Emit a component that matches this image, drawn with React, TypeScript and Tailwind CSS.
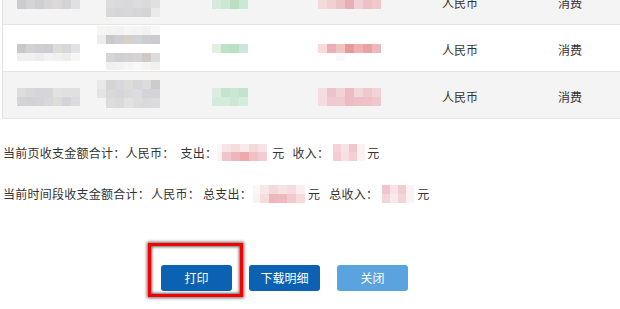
import React from "react";

type Grid = { h: string; cells: { w: string; c: string }[] }[];

function Mosaic({ rows }: { rows: Grid }) {
  return (
    <div className="flex flex-col">
      {rows.map((r, i) => (
        <div key={i} className={`flex ${r.h}`}>
          {r.cells.map((c, j) => (
            <div key={j} className={`${c.w} h-full ${c.c}`} />
          ))}
        </div>
      ))}
    </div>
  );
}

const w9 = "w-[9px]";
const w8 = "w-[8px]";
const row = (h: string, w: string, colors: string[]) => ({
  h,
  cells: colors.map((c) => ({ w, c })),
});

// Row 1
const r1c1: Grid = [
  row("h-[9px]", w9, ["bg-[#dadadc]", "bg-[#d8d8da]", "bg-[#d6d6d8]", "bg-[#dadadc]", "bg-[#e0dedc]", "bg-[#d8d8da]", "bg-[#e2e2e4]"]),
  row("h-[9px]", w9, ["bg-[#cbcbcd]", "bg-[#d4d4d6]", "bg-[#cfcfd1]", "bg-[#d6d6d8]", "bg-[#dcdad6]", "bg-[#d3d3d5]", "bg-[#e0e0e2]"]),
];
const r1c2: Grid = [
  row("h-[8px]", w9, ["", "bg-[#e4e4e4]", "bg-[#e0e0e2]", "bg-[#e2e2e2]", "bg-[#dedee0]", "bg-[#e2e2e2]", "bg-[#e4e4e6]"]),
  row("h-[9px]", w9, ["", "bg-[#dcdcdc]", "bg-[#d8d8da]", "bg-[#dadada]", "bg-[#d8d8dc]", "bg-[#dcdcdc]", "bg-[#dedee0]"]),
  row("h-[8px]", w9, ["", "bg-[#dcdcdc]", "bg-[#dadadc]", "bg-[#d9d9d9]", "bg-[#dcdcde]", "bg-[#dadada]", "bg-[#e0e0e0]"]),
  row("h-[9px]", w9, ["", "bg-[#d8d8d8]", "bg-[#d6d6d8]", "bg-[#d8d8da]", "bg-[#d6d6d6]", "bg-[#d4d4d6]", "bg-[#eaeaea]"]),
];
const r1g: Grid = [
  row("h-[9px]", w9, ["bg-[#e0eee2]", "bg-[#d4ebdb]", "bg-[#cce6d2]", "bg-[#d6eddf]"]),
  row("h-[9px]", w9, ["bg-[#d8eadb]", "bg-[#cce8d4]", "bg-[#bcdfc4]", "bg-[#c9e8d7]"]),
];
const r1p: Grid = [
  row("h-[9px]", w9, ["bg-[#f6e0e0]", "bg-[#f2d4d6]", "bg-[#efccd0]", "bg-[#ecc0c4]", "bg-[#f2d6da]", "bg-[#efc8cc]", "bg-[#f2d0d4]"]),
  row("h-[9px]", w9, ["bg-[#f5dada]", "bg-[#f0d0d0]", "bg-[#ebc4c8]", "bg-[#e8b0b4]", "bg-[#f0d0d4]", "bg-[#ecc0c4]", "bg-[#f0c8cc]"]),
];

// Row 2
const r2c1: Grid = [
  row("h-[9px]", w9, ["bg-[#c9c9cb]", "bg-[#d2d2d6]", "bg-[#cfcfd1]", "bg-[#cbccd4]", "bg-[#dedcd8]", "bg-[#d8d8da]", "bg-[#e0e2e4]"]),
  row("h-[8px]", w9, ["bg-[#efefef]", "bg-[#f0f0f0]", "bg-[#ededed]", "bg-[#f3f3f3]", "bg-[#f1f1f1]", "bg-[#eeeeee]", "bg-[#f6f6f6]"]),
];
const r2c2: Grid = [
  row("h-[9px]", w9, ["bg-[#f6f6f4]", "bg-[#f4f4f4]", "bg-[#f2f2f2]", "bg-[#f6f6f6]", "bg-[#f4f4f4]", "bg-[#f2f2f4]", "bg-[#f8f8f8]"]),
  row("h-[9px]", w9, ["bg-[#ececea]", "bg-[#c9c9cb]", "bg-[#cecdd2]", "bg-[#d5d0cb]", "bg-[#d1d2d8]", "bg-[#cdcdd1]", "bg-[#cbcbcf]"]),
  row("h-[9px]", w9, ["", "", "", "", "", "", ""]),
  row("h-[9px]", w9, ["", "bg-[#d5d5d5]", "bg-[#d0d0d2]", "bg-[#d2d2d4]", "bg-[#d4d4d4]", "bg-[#cfc8c4]", "bg-[#dcdcde]"]),
  row("h-[8px]", w9, ["", "bg-[#f0f0f0]", "bg-[#f2f2f2]", "bg-[#f5f5f5]", "bg-[#f8f8f8]", "bg-[#f6f4f2]", "bg-[#f0f0f0]"]),
];
const r2g: Grid = [row("h-[9px]", w9, ["bg-[#e2efdc]", "bg-[#bde1cb]", "bg-[#bde0c3]", "bg-[#cbe8d9]"])];
const r2p: Grid = [
  row("h-[9px]", w9, ["bg-[#f8dbd8]", "bg-[#eab0b5]", "bg-[#f2c3c3]", "bg-[#e8999a]", "bg-[#eeb0b3]", "bg-[#eaa3a5]", "bg-[#eeb9bd]"]),
  row("h-[8px]", w9, ["", "", "bg-[#fbf8fa]", "", "", "", ""]),
];

// Row 3
const r3c1: Grid = [
  row("h-[9px]", w9, ["bg-[#dcdcdc]", "bg-[#d8d8da]", "bg-[#d6d6d8]", "bg-[#d4d6da]", "bg-[#e2e2e2]", "bg-[#e0e0e0]", "bg-[#e0e0e2]"]),
  row("h-[9px]", w9, ["bg-[#d4d4d6]", "bg-[#d2d2d2]", "bg-[#d4d4d4]", "bg-[#d6d8da]", "bg-[#dedcd8]", "bg-[#d4d4d8]", "bg-[#dcdcde]"]),
];
const r3c2: Grid = [
  row("h-[9px]", w9, ["bg-[#e8e8e8]", "bg-[#d4d4d4]", "bg-[#d8d8dc]", "bg-[#dcdcd8]", "bg-[#d6d6da]", "bg-[#dcdcdc]", "bg-[#ccccd0]"]),
  row("h-[9px]", w9, ["bg-[#e4e4e4]", "bg-[#d8d8d8]", "bg-[#d6d6da]", "bg-[#dadada]", "bg-[#dcdce0]", "bg-[#d4d4d8]", "bg-[#d4d4d6]"]),
  row("h-[10px]", w9, ["", "bg-[#dcdcdc]", "bg-[#dadadc]", "bg-[#e2e2e0]", "bg-[#dcdcdc]", "bg-[#dadada]", "bg-[#dcdcde]"]),
];
const r3g: Grid = [
  row("h-[9px]", w9, ["bg-[#dcece0]", "bg-[#c4e4cf]", "bg-[#cbe6d2]", "bg-[#c2e3cc]"]),
  row("h-[9px]", w9, ["bg-[#d3ebdd]", "bg-[#d2ebdb]", "bg-[#cde7d3]", "bg-[#d3ecdc]"]),
];
const r3p: Grid = [
  row("h-[9px]", w9, ["bg-[#f3dde0]", "bg-[#edc3cb]", "bg-[#f1d2d5]", "bg-[#ecbcc3]", "bg-[#f1d6da]", "bg-[#eec8cc]", "bg-[#f1d4d8]"]),
  row("h-[9px]", w9, ["bg-[#f3dde0]", "bg-[#eecacf]", "bg-[#f0cacd]", "bg-[#ecbcc2]", "bg-[#eebfc4]", "bg-[#edc1c5]", "bg-[#eec8cc]"]),
];

// Summary
const s1a: Grid = [
  {
    h: "h-[8px]",
    cells: [
      { w: "w-[5px]", c: "bg-[#fdf8f8]" },
      { w: w9, c: "bg-[#f8e4e6]" },
      { w: w9, c: "bg-[#f5dcdd]" },
      { w: w9, c: "bg-[#f9eaea]" },
      { w: w9, c: "bg-[#f3dada]" },
      { w: w9, c: "bg-[#f7e4e6]" },
    ],
  },
  {
    h: "h-[9px]",
    cells: [
      { w: "w-[5px]", c: "bg-[#fcf0f0]" },
      { w: w9, c: "bg-[#f0c4c8]" },
      { w: w9, c: "bg-[#eeb5bc]" },
      { w: w9, c: "bg-[#eda9b0]" },
      { w: w9, c: "bg-[#f0c0c4]" },
      { w: w9, c: "bg-[#f2ccd0]" },
    ],
  },
];
const s1b: Grid = [
  row("h-[8px]", w8, ["bg-[#f5d3d6]", "bg-[#f8e4e6]", "bg-[#f0c8cc]", "bg-[#fbf0f2]"]),
  row("h-[9px]", w8, ["bg-[#f4cbd0]", "bg-[#f8e0e2]", "bg-[#f3d0d3]", "bg-[#fcf2f6]"]),
];
const s2a: Grid = [
  {
    h: "h-[9px]",
    cells: [
      { w: "w-[7px]", c: "bg-[#fdf6f6]" },
      { w: w9, c: "bg-[#f9e6e8]" },
      { w: w9, c: "bg-[#f5d8da]" },
      { w: w9, c: "bg-[#f7e2e4]" },
      { w: w9, c: "bg-[#f6dcdf]" },
      { w: w9, c: "bg-[#fbeeee]" },
    ],
  },
  {
    h: "h-[9px]",
    cells: [
      { w: "w-[7px]", c: "bg-[#fcf2f2]" },
      { w: w9, c: "bg-[#f6dcdc]" },
      { w: w9, c: "bg-[#eeb5bb]" },
      { w: w9, c: "bg-[#efb9bf]" },
      { w: w9, c: "bg-[#f2c9cd]" },
      { w: w9, c: "bg-[#f6dadd]" },
    ],
  },
];
const s2b: Grid = [
  row("h-[9px]", w8, ["bg-[#f1c6cb]", "bg-[#f8e2e6]", "bg-[#f2ccd0]", "bg-[#fbf1f3]"]),
  row("h-[9px]", w8, ["bg-[#f5d5d8]", "bg-[#fae9eb]", "bg-[#f4d4d7]", "bg-[#fbf2f4]"]),
];

function TableRow({
  bg,
  pad,
  c1,
  c2,
  g,
  p,
}: {
  bg: string;
  pad: [string, string, string, string];
  c1: Grid;
  c2: Grid;
  g: Grid;
  p: Grid;
}) {
  return (
    <div className={`flex h-[47px] border-b border-[#e6e6e6] ${bg}`}>
      <div className={`w-[90px] pl-[14px] ${pad[0]}`}>
        <Mosaic rows={c1} />
      </div>
      <div className={`w-[85px] pl-[4px] ${pad[1]}`}>
        <Mosaic rows={c2} />
      </div>
      <div className={`w-[120px] pl-[34px] ${pad[2]}`}>
        <Mosaic rows={g} />
      </div>
      <div className={`w-[102px] pl-[20px] ${pad[3]}`}>
        <Mosaic rows={p} />
      </div>
      <div className="w-[120px] flex items-center justify-center pt-[4px]">人民币</div>
      <div className="w-[100px] flex items-center justify-center pt-[4px]">消费</div>
    </div>
  );
}

export default function App() {
  return (
    <div
      className="w-[620px] h-[309px] bg-white text-[12px] text-[#333] overflow-hidden"
      style={{ fontFamily: '"Noto Sans CJK SC", "Microsoft YaHei", sans-serif' }}
    >
      <div className="h-[119px] overflow-hidden pl-[2px]">
        <div className="-mt-[22px] border-l border-[#e2e2e2] leading-[16px]">
          <TableRow bg="bg-[#f4f4f4]" pad={["pt-[13px]", "pt-[5px]", "pt-[13px]", "pt-[13px]"]} c1={r1c1} c2={r1c2} g={r1g} p={r1p} />
          <TableRow bg="bg-white" pad={["pt-[19px]", "pt-[1px]", "pt-[19px]", "pt-[19px]"]} c1={r2c1} c2={r2c2} g={r2g} p={r2p} />
          <TableRow bg="bg-[#f4f4f4]" pad={["pt-[16px]", "pt-[8px]", "pt-[16px]", "pt-[16px]"]} c1={r3c1} c2={r3c2} g={r3g} p={r3p} />
        </div>
      </div>

      <div className="mt-[25px] pl-[3px] flex items-center h-[17px] leading-[16px] tracking-[0.25px]">
        <span>当前页收支金额合计：</span>
        <span>人民币：</span>
        <span className="ml-[6px]">支出：</span>
        <Mosaic rows={s1a} />
        <span className="ml-[5px]">元</span>
        <span className="ml-[8px]">收入：</span>
        <span className="ml-[4px]">
          <Mosaic rows={s1b} />
        </span>
        <span className="ml-[2px]">元</span>
      </div>

      <div className="mt-[24px] pl-[3px] flex items-center h-[18px] leading-[16px] tracking-[0.25px]">
        <span>当前时间段收支金额合计：</span>
        <span className="ml-[1px]">人民币：</span>
        <span className="ml-[3px]">总支出：</span>
        <span className="ml-[1px]">
          <Mosaic rows={s2a} />
        </span>
        <span className="ml-[3px]">元</span>
        <span className="ml-[9px]">总收入：</span>
        <span className="ml-[4px]">
          <Mosaic rows={s2b} />
        </span>
        <span className="ml-[3px]">元</span>
      </div>

      <div className="mt-[62px] ml-[161px] flex gap-[17px]">
        <div className="relative">
          <button className="w-[71px] h-[26px] rounded-[3px] bg-[#0b62b2] text-white text-[12px] leading-[26px]">
            打印
          </button>
          <div className="absolute left-[-13px] right-[-11px] top-[-22px] bottom-[-6px] border-[3px] border-[#f50000] shadow-[0_0_3px_1px_rgba(60,60,60,0.8),inset_0_0_3px_1px_rgba(60,60,60,0.8)] pointer-events-none" />
        </div>
        <button className="w-[71px] h-[26px] rounded-[3px] bg-[#0b62b2] text-white text-[12px] leading-[26px]">
          下载明细
        </button>
        <button className="w-[71px] h-[26px] rounded-[3px] bg-[#5aa3de] text-white text-[12px] leading-[26px]">
          关闭
        </button>
      </div>
    </div>
  );
}
